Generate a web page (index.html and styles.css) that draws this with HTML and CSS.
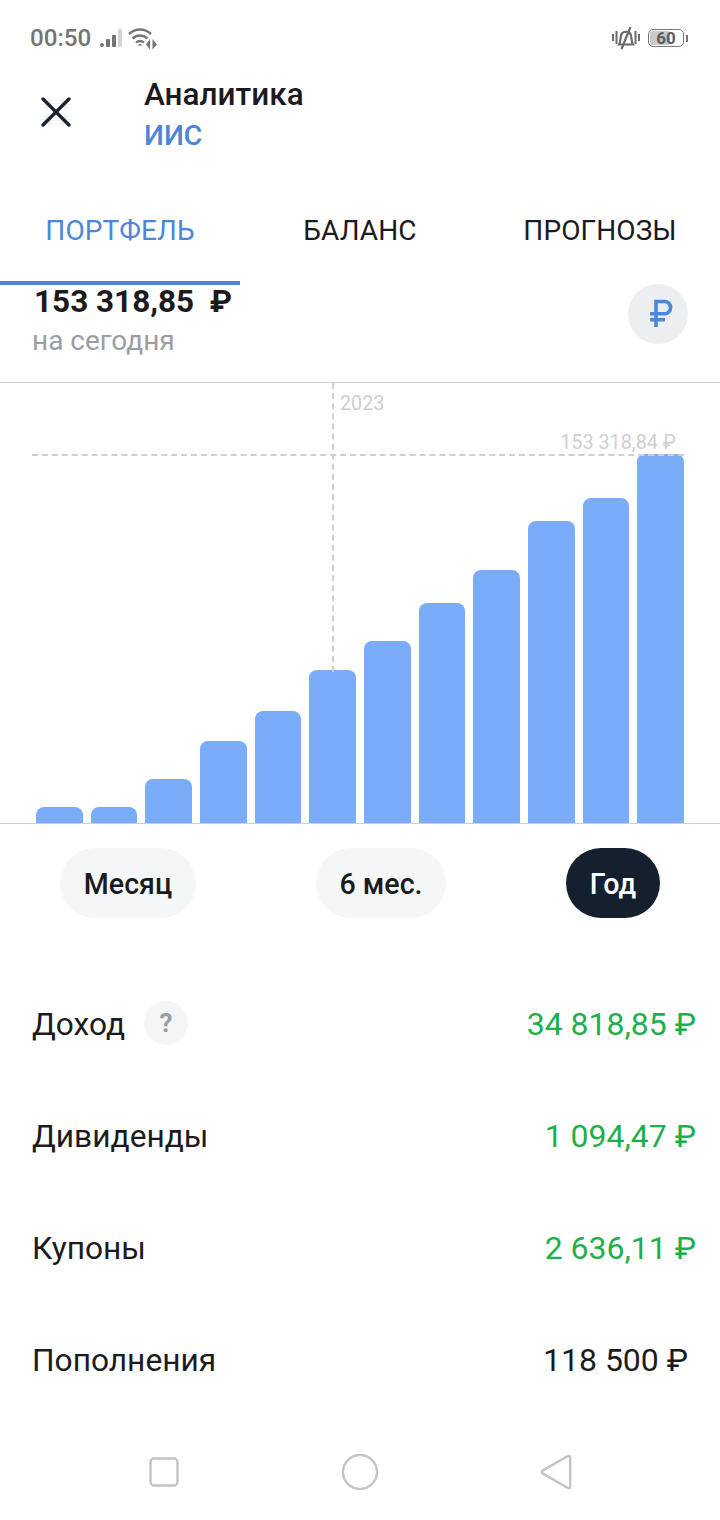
FILE: index.html
```html
<!DOCTYPE html>
<html lang="ru">
<head>
<meta charset="utf-8">
<title>Аналитика</title>
<link rel="stylesheet" href="styles.css">
</head>
<body>
<div class="screen">
  <div class="status">
    <div class="status-left">
      <span class="time">00:50</span>
      <svg class="signal" width="22" height="18" viewBox="0 0 22 18">
        <rect x="0" y="14" width="4" height="4" rx="2" fill="#757575"/>
        <rect x="6" y="10" width="4" height="8" rx="1" fill="#757575"/>
        <rect x="12" y="6" width="4" height="12" rx="1" fill="#757575"/>
        <rect x="18" y="0" width="4" height="18" rx="1" fill="#d4d4d4"/>
      </svg>
      <svg class="wifi" width="30" height="23" viewBox="0 0 30 23" fill="none" stroke="#757575" stroke-width="2.400">
        <path d="M1 7C7.500 1 16.500 1 23 7"/>
        <path d="M4.500 11.500C9 7.500 15 7.500 19.500 11.500"/>
        <path d="M8 15.500C10.500 13.500 13.500 13.500 16 15.500"/>
        <path d="M9.500 18.500 12 16.500l2.500 2z" fill="#757575" stroke="none"/>
        <path d="M22 12v10.500l-4-5z" fill="#757575" stroke="none"/>
        <path d="M24.500 12v10.500l4.500-5z" fill="#757575" stroke="none"/>
      </svg>
    </div>
    <div class="status-right">
      <svg class="bell" width="28" height="24" viewBox="0 0 28 24" fill="none" stroke="#6b6b6b" stroke-width="2">
        <path d="M1 8v7M4.500 5v13M23.500 5v13M27 8v7"/>
        <path d="M7 18.500c2-3 1-7 2.500-10.500 1.500-3 7.500-3 9 0 1.500 3.500.5 7.500 2.500 10.500z" stroke-width="2.200"/>
        <path d="M18.500 1 9.500 23" stroke-width="2.200"/>
      </svg>
      <div class="battery"><span class="battery-level"></span><span class="battery-num">60</span></div>
      <span class="battery-tip"></span>
    </div>
  </div>

  <header class="header">
    <button class="close" aria-label="Закрыть">
      <svg width="30" height="30" viewBox="0 0 30 30" fill="none" stroke="#1a2230" stroke-width="3.400" stroke-linecap="round">
        <path d="M2 2 28 28M28 2 2 28"/>
      </svg>
    </button>
    <div class="titles">
      <div class="title">Аналитика</div>
      <div class="subtitle">ИИС</div>
    </div>
  </header>

  <nav class="tabs">
    <div class="tab active">ПОРТФЕЛЬ</div>
    <div class="tab">БАЛАНС</div>
    <div class="tab">ПРОГНОЗЫ</div>
  </nav>

  <section class="summary">
    <div>
      <div class="total">153 318,85&nbsp; ₽</div>
      <div class="today">на сегодня</div>
    </div>
    <div class="currency">
      <svg width="60" height="60" viewBox="0 0 60 60" fill="none" stroke="#4a87d9" stroke-width="3.600">
        <path d="M28 43V17.500h8.500a6.100 6.100 0 0 1 0 12.200H22"/>
        <path d="M22 35.700h15"/>
      </svg>
    </div>
  </section>

  <section class="chart">
    <div class="vline"></div>
    <div class="hline"></div>
    <span class="year">2023</span>
    <span class="maxval">153 318,84 ₽</span>
    <div class="bars">
      <div class="bar" style="height:16px"></div>
      <div class="bar" style="height:16px"></div>
      <div class="bar" style="height:44px"></div>
      <div class="bar" style="height:82px"></div>
      <div class="bar" style="height:112px"></div>
      <div class="bar" style="height:153px"></div>
      <div class="bar" style="height:182px"></div>
      <div class="bar" style="height:220px"></div>
      <div class="bar" style="height:253px"></div>
      <div class="bar" style="height:302px"></div>
      <div class="bar" style="height:325px"></div>
      <div class="bar" style="height:369px"></div>
    </div>
  </section>

  <div class="periods">
    <div class="pill">Месяц</div>
    <div class="pill">6 мес.</div>
    <div class="pill selected">Год</div>
  </div>

  <section class="rows">
    <div class="row">
      <div class="label">Доход <span class="help">?</span></div>
      <div class="value green">34 818,85 ₽</div>
    </div>
    <div class="row">
      <div class="label">Дивиденды</div>
      <div class="value green">1 094,47 ₽</div>
    </div>
    <div class="row">
      <div class="label">Купоны</div>
      <div class="value green">2 636,11 ₽</div>
    </div>
    <div class="row">
      <div class="label">Пополнения</div>
      <div class="value inset">118 500 ₽</div>
    </div>
  </section>

  <footer class="navbar">
    <svg width="30" height="30" viewBox="0 0 30 30" fill="none" stroke="#c4c4c4" stroke-width="2.400"><rect x="1.500" y="1.500" width="27" height="27" rx="3.500"/></svg>
    <svg width="38" height="38" viewBox="0 0 38 38" fill="none" stroke="#c4c4c4" stroke-width="2.400"><circle cx="19" cy="19" r="17"/></svg>
    <svg width="32" height="36" viewBox="0 0 32 36" fill="none" stroke="#c4c4c4" stroke-width="2.400" stroke-linejoin="round"><path d="M27.500 2.200C29 1.400 30.200 2 30.200 3.600V32.400C30.200 34 29 34.600 27.500 33.800L3 19.600C1.600 18.800 1.600 17.200 3 16.400z"/></svg>
  </footer>
</div>
</body>
</html>
```
FILE: styles.css
```css
* { box-sizing: border-box; }
html, body { margin: 0; padding: 0; background: #fff; }
body { font-family: Roboto, "Noto Sans", sans-serif; color: #1b1b1d; }
.screen { width: 720px; height: 1520px; overflow: hidden; display: flex; flex-direction: column; }

.status { height: 72px; padding: 4px 32px 0 30px; display: flex; justify-content: space-between; align-items: center; }
.status-left { display: flex; align-items: center; gap: 8px; }
.time { font-size: 24.200px; font-weight: 500; color: #757575; }
.signal { margin: 0 -2px 0 1px; }
.wifi { margin-top: 1px; }
.status-right { display: flex; align-items: center; }
.bell { margin-right: 8px; }
.battery { position: relative; width: 36px; height: 18px; border: 1.500px solid #777; border-radius: 5px; overflow: hidden; display: flex; align-items: center; justify-content: center; }
.battery-level { position: absolute; left: 1px; top: 1px; bottom: 1px; width: 20px; background: #c9c9c9; border-radius: 2px; }
.battery-num { position: relative; font-size: 17px; font-weight: 700; color: #5d5d5d; }
.battery-tip { width: 2px; height: 7px; margin-left: 2px; background: #777; }

.header { height: 88px; display: flex; align-items: center; }
.close { width: 144px; height: 88px; padding: 0 0 8px 41px; margin: 0; border: 0; background: none; display: flex; align-items: center; }
.titles { display: flex; flex-direction: column; margin-top: -2px; }
.title { font-size: 31.500px; line-height: 40px; font-weight: 500; }
.subtitle { font-size: 28.200px; line-height: 40px; margin-top: 1px; font-weight: 500; color: #4a87d9; }

.tabs { height: 125px; display: flex; padding-top: 30px; }
.tab { width: 240px; height: 95px; padding-bottom: 10px; display: flex; align-items: center; justify-content: center; font-size: 28px; letter-spacing: 0.100px; color: #1b1b1d; border-bottom: 4px solid transparent; }
.active { color: #4a87d9; border-bottom-color: #4a87d9; }

.summary { height: 97px; padding: 0 32px; display: flex; justify-content: space-between; position: relative; }
.total { font-size: 31.500px; line-height: 34px; font-weight: 700; margin: 0 0 0 2px; }
.today { font-size: 28px; line-height: 38px; margin-top: 3px; color: #9a9ea3; }
.currency { width: 60px; height: 60px; margin-top: -1px; border-radius: 50%; background: #eceef0; }

.chart { position: relative; height: 442px; border-top: 1px solid #cfcfcf; border-bottom: 1px solid #cfcfcf; display: flex; flex-direction: column; justify-content: flex-end; padding: 0 36px; }
.bars { display: flex; align-items: flex-end; gap: 8px; }
.bar { flex: 1; background: #7aacfa; border-radius: 8px 8px 0 0; }
.vline { position: absolute; left: 332px; top: 0; height: 289px; border-left: 2px dashed #cfcfcf; }
.hline { position: absolute; left: 32px; right: 36px; top: 71px; border-top: 2px dashed #cfcfcf; }
.year { position: absolute; left: 340px; top: 9px; font-size: 19.800px; color: #cfcfcf; }
.maxval { position: absolute; right: 44px; top: 48px; font-size: 19.800px; color: #cfcfcf; }

.periods { height: 95px; padding-top: 24px; display: flex; }
.pill { width: 136px; height: 70px; padding-top: 2px; border-radius: 35px; background: #f4f6f8; font-size: 28.600px; font-weight: 500; display: flex; align-items: center; justify-content: center; margin-left: 60px; }
.pill:nth-child(2) { width: 130px; margin-left: 120px; }
.pill:nth-child(3) { width: 94px; margin-left: 120px; }
.selected { background: #15202e; color: #fff; }

.rows { padding: 49px 24px 0 32px; display: flex; flex-direction: column; }
.row { height: 112px; display: flex; justify-content: space-between; align-items: center; font-size: 32px; }
.label { display: flex; align-items: center; gap: 19px; font-size: 31.700px; }
.help { width: 44px; height: 44px; margin-top: -2px; border-radius: 50%; background: #f4f5f6; color: #9a9ea3; font-size: 26px; font-weight: 700; display: flex; align-items: center; justify-content: center; }
.green { color: #1eaf4b; }
.inset { margin-right: 8px; }

.navbar { margin-top: auto; height: 96px; padding: 0 148px 0 149px; display: flex; justify-content: space-between; align-items: center; }
```
